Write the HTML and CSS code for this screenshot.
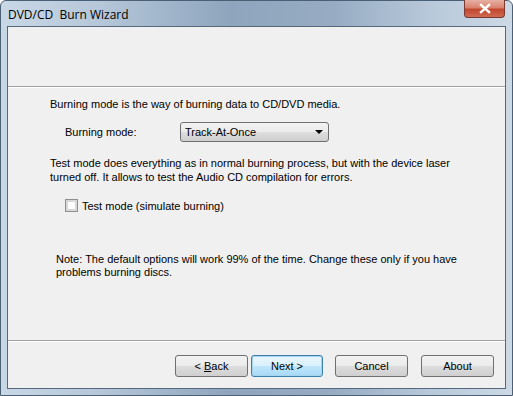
FILE: index.html
```html
<!DOCTYPE html>
<html lang="en">
<head>
  <meta charset="UTF-8" />
  <title>DVD/CD Burn Wizard</title>
  <link rel="stylesheet" href="styles.css">
</head>
<body>

  <div class="window">
    <div class="titlebar">
      <span class="title">DVD/CD&nbsp; Burn Wizard</span>
      <span class="close">
        <svg width="14" height="11" viewBox="0 0 14 11"><path d="M3 2 L11 9 M11 2 L3 9" stroke="#fff" stroke-width="2.4" stroke-linecap="square"/></svg>
      </span>
    </div>

    <div class="client">
      <div class="header"></div>

      <div class="content">
        <p>Burning mode is the way of burning data to CD/DVD media.</p>

        <div class="row">
          <label class="field-label">Burning mode:</label>
          <div class="combo">
            <span>Track-At-Once</span>
            <span class="arrow"></span>
          </div>
        </div>

        <p>Test mode does everything as in normal burning process, but with the device laser turned off. It allows to test the Audio CD compilation for errors.</p>

        <div class="check-row">
          <span class="checkbox"></span>
          <span>Test mode (simulate burning)</span>
        </div>

        <p class="note">Note: The default options will work 99% of the time. Change these only if you have problems burning discs.</p>
      </div>

      <div class="footer">
        <button class="btn">&lt; <u>B</u>ack</button>
        <button class="btn default">Next &gt;</button>
        <button class="btn cancel">Cancel</button>
        <button class="btn about">About</button>
      </div>
    </div>
  </div>

</body>
</html>
```

FILE: styles.css
```css
body {
  margin: 0;
  font-family: "Liberation Sans", Arial, sans-serif;
  font-size: 11px;
  color: #000;
}
.window {
  width: 513px;
  height: 396px;
  box-sizing: border-box;
  padding: 0 6px 6px 6px;
  display: flex;
  flex-direction: column;
  background: linear-gradient(90deg, #c9d8e6 0%, #b4c6d8 20%, #8ea5bd 45%, #97acc3 65%, #b9cadb 85%, #cdd9e5 100%);
  border-radius: 6px 6px 0 0;
  border: 1px solid #4b5f75;
}
.titlebar {
  height: 25px;
  display: flex;
  align-items: flex-start;
  justify-content: space-between;
}
.title {
  font-family: "Open Sans", "Noto Sans", sans-serif;
  font-size: 12px;
  padding: 5px 0 0 1px;
  color: #000;
}
.close {
  width: 41px;
  height: 18px;
  margin: -1px 1px 0 0;
  box-sizing: border-box;
  border: 1px solid #7a3a30;
  border-top: none;
  border-radius: 0 0 4px 4px;
  background: linear-gradient(#e6b0a3 0%, #d9836f 45%, #c2472f 55%, #cf6a52 100%);
  display: flex;
  align-items: center;
  justify-content: center;
}
.client {
  flex: 1;
  display: flex;
  flex-direction: column;
  background: #f0f0f0;
  border: 1px solid #55687d;
}
.header {
  height: 59px;
  border-bottom: 1px solid #a0a0a0;
  box-shadow: 0 1px 0 #fff;
}
.content {
  flex: 1;
  padding: 10px 0 0 42px;
}
.content p {
  margin: 0;
  line-height: 14px;
  width: 420px;
}
.row {
  display: flex;
  align-items: center;
  margin: 11px 0 14px 0;
}
.field-label {
  width: 115px;
  padding-left: 15px;
}
.combo {
  width: 149px;
  height: 20px;
  box-sizing: border-box;
  border: 1px solid #707070;
  border-radius: 3px;
  background: linear-gradient(#f2f2f2 0%, #ebebeb 50%, #dddddd 51%, #cfcfcf 100%);
  display: flex;
  align-items: center;
  justify-content: space-between;
  padding: 0 4px 0 4px;
}
.arrow {
  width: 0;
  height: 0;
  border-left: 4px solid transparent;
  border-right: 4px solid transparent;
  border-top: 4px solid #000;
  margin-right: 1px;
}
.check-row {
  display: flex;
  align-items: center;
  gap: 4px;
  margin: 15px 0 0 15px;
}
.checkbox {
  width: 13px;
  height: 13px;
  box-sizing: border-box;
  border: 1px solid #8e8f8f;
  background: #fff;
  box-shadow: inset 0 0 0 2px #d8d8d8;
}
.content p.note {
  margin: 41px 0 0 6px;
  width: 430px;
  line-height: 13px;
}
.footer {
  border-top: 1px solid #a0a0a0;
  box-shadow: inset 0 1px 0 #fff;
  padding: 14px 11px 11px 0;
  display: flex;
  justify-content: flex-end;
  gap: 3px;
}
.btn {
  width: 73px;
  height: 22px;
  font-family: inherit;
  font-size: 11px;
  color: #000;
  border: 1px solid #707070;
  border-radius: 3px;
  background: linear-gradient(#f2f2f2 0%, #ebebeb 50%, #dddddd 51%, #cfcfcf 100%);
  padding: 0;
}
.btn.default {
  width: 72px;
  border-color: #3c7fb1;
  box-shadow: inset 0 0 0 1px #a6d4ef;
  background: linear-gradient(#eaf6fd 0%, #d9f0fc 50%, #bee6fd 51%, #a7d9f5 100%);
}
.btn.cancel {
  margin-left: 9px;
}
.btn.about {
  margin-left: 10px;
}
```
